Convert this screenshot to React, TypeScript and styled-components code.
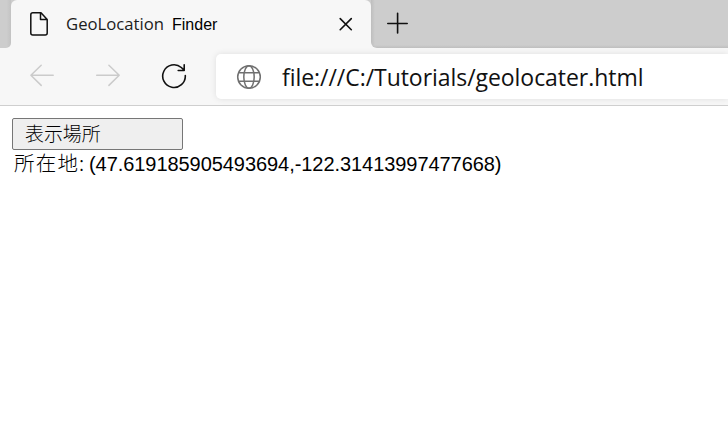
import React from "react";
import styled, { createGlobalStyle } from "styled-components";

const GlobalStyle = createGlobalStyle`
  * { box-sizing: border-box; }
  html, body { margin: 0; background: #fff; overflow: hidden; }
`;

const Browser = styled.div`
  width: 728px;
  height: 428px;
  display: flex;
  flex-direction: column;
  background: #fff;
  color: #000;
  overflow: hidden;
`;

const TabStrip = styled.header`
  height: 48px;
  flex: none;
  display: flex;
  background: #f7f7f7;
`;

const StripEdge = styled.div`
  width: 11px;
  background: linear-gradient(to right, #cdcdcd 60%, #c3c3c3);
  border-bottom-right-radius: 5px;
`;

const TabSlot = styled.div`
  width: 360px;
  display: flex;
  background: linear-gradient(#cdcdcd 50%, #f7f7f7 50%);
`;

const Tab = styled.div`
  flex: 1;
  display: flex;
  align-items: center;
  padding-left: 18px;
  background: #f7f7f7;
  border-radius: 6px 6px 0 0;
`;

const StripRest = styled.div`
  flex: 1;
  display: flex;
  padding: 12px 0 0 16px;
  background: linear-gradient(to bottom, transparent 45px, #bebebe 48px),
    linear-gradient(to right, #bebebe, #cdcdcd 4px);
  border-bottom-left-radius: 6px;
`;

const TabTitle = styled.div`
  display: flex;
  align-items: baseline;
  margin-left: 17px;
  width: 273px;
  white-space: pre;
`;

const TitleLead = styled.span`
  width: 106px;
  color: #1c1c1c;
  font: 400 16.7px/24px "Open Sans", sans-serif;
`;

const TitleTail = styled.span`
  font: 16px/22px "Liberation Sans", sans-serif;
`;

const Toolbar = styled.nav`
  height: 58px;
  flex: none;
  display: flex;
  align-items: flex-start;
  background: #f7f7f7;
  border-bottom: 1px solid #cfcfcf;
`;

const NavButtons = styled.div`
  display: flex;
  width: 216px;
  height: 56px;
  align-items: center;
  padding-left: 29px;
  gap: 40px;
`;

const AddressBar = styled.div`
  flex: 1;
  height: 45px;
  margin-top: 6px;
  display: flex;
  align-items: center;
  padding-left: 20px;
  gap: 20px;
  background: #fff;
  border-radius: 5px 0 0 5px;
  box-shadow: 0 0 6px rgba(0, 0, 0, 0.1);
`;

const Url = styled.span`
  color: #111;
  font: 400 23px/32px "Open Sans", sans-serif;
  letter-spacing: -0.05px;
  padding-top: 1px;
  white-space: nowrap;
`;

const Page = styled.main`
  flex: 1;
  display: flex;
  flex-direction: column;
  align-items: flex-start;
  padding: 12px 12px 0;
`;

const LocateButton = styled.button`
  width: 171px;
  height: 32px;
  padding: 0 0 2px 12px;
  text-align: left;
  border: 1px solid #767676;
  border-radius: 2px;
  background: #efefef;
  color: #000;
  font: 300 18.9px/28px "Noto Sans CJK JP", sans-serif;
`;

const Result = styled.p`
  margin: -2px 0 0;
  height: 28px;
  padding-left: 2px;
  display: flex;
  align-items: baseline;
  white-space: pre;
`;

const ResultLabel = styled.span`
  width: 75px;
  font: 300 20.5px/28px "Noto Sans CJK JP", sans-serif;
  letter-spacing: 1.2px;
`;

const Coordinates = styled.span`
  font: 20px/28px "Liberation Sans", sans-serif;
  letter-spacing: -0.06px;
`;

const Icon = styled.svg`
  flex: none;
  display: block;
  fill: none;
  stroke-linecap: round;
  stroke-linejoin: round;
`;

export default function App() {
  return (
    <Browser>
      <GlobalStyle />
      <TabStrip>
        <StripEdge />
        <TabSlot>
          <Tab>
            <Icon width="20" height="26" viewBox="0 0 20 26" stroke="#111" strokeWidth="1.5">
              <path d="M3.5 1.7H12L18.2 8.5V22Q18.2 24 16.2 24H3.8Q1.8 24 1.8 22V3.7Q1.8 1.7 3.8 1.7M11.5 1.9V8.5H17.8" />
            </Icon>
            <TabTitle>
              <TitleLead>GeoLocation</TitleLead>
              <TitleTail>Finder</TitleTail>
            </TabTitle>
            <Icon width="14" height="14" viewBox="0 0 14 14" stroke="#111" strokeWidth="1.6">
              <path d="M1.2 1.6 12.3 12.7M12.3 1.6 1.2 12.7" />
            </Icon>
          </Tab>
        </TabSlot>
        <StripRest>
          <Icon width="22" height="22" viewBox="0 0 22 22" stroke="#111" strokeWidth="1.6">
            <path d="M10.6 1.3V21M.8 11.5H20.2" />
          </Icon>
        </StripRest>
      </TabStrip>
      <Toolbar>
        <NavButtons>
          <Icon width="26" height="24" viewBox="0 0 26 24" stroke="#cbcbcb" strokeWidth="1.5">
            <path d="M24.2 11.2H1.9M12.2 1.2 1.9 11.2 12.2 21.4" />
          </Icon>
          <Icon width="26" height="24" viewBox="0 0 26 24" stroke="#cbcbcb" strokeWidth="1.5">
            <path d="M1.7 11.2H24.2M13.9 1.2 24.2 11.2 13.9 21.4" />
          </Icon>
          <Icon width="26" height="26" viewBox="0 0 26 26" stroke="#111" strokeWidth="1.6">
            <path d="M24.3 12.5A11.3 11.3 0 1 1 20.3 4.5L23.2 7.2M23.2 1.8V7.5H17.2" />
          </Icon>
        </NavButtons>
        <AddressBar>
          <Icon width="26" height="26" viewBox="0 0 26 26" stroke="#707070" strokeWidth="1.5">
            <circle cx="13" cy="13" r="11.3" />
            <ellipse cx="13" cy="13" rx="5.2" ry="11.3" />
            <path d="M2.8 8.7H23.2M2.8 17.3H23.2" />
          </Icon>
          <Url>file:///C:/Tutorials/geolocater.html</Url>
        </AddressBar>
      </Toolbar>
      <Page>
        <LocateButton>表示場所</LocateButton>
        <Result>
          <ResultLabel>所在地: </ResultLabel>
          <Coordinates>(47.619185905493694,-122.31413997477668)</Coordinates>
        </Result>
      </Page>
    </Browser>
  );
}
